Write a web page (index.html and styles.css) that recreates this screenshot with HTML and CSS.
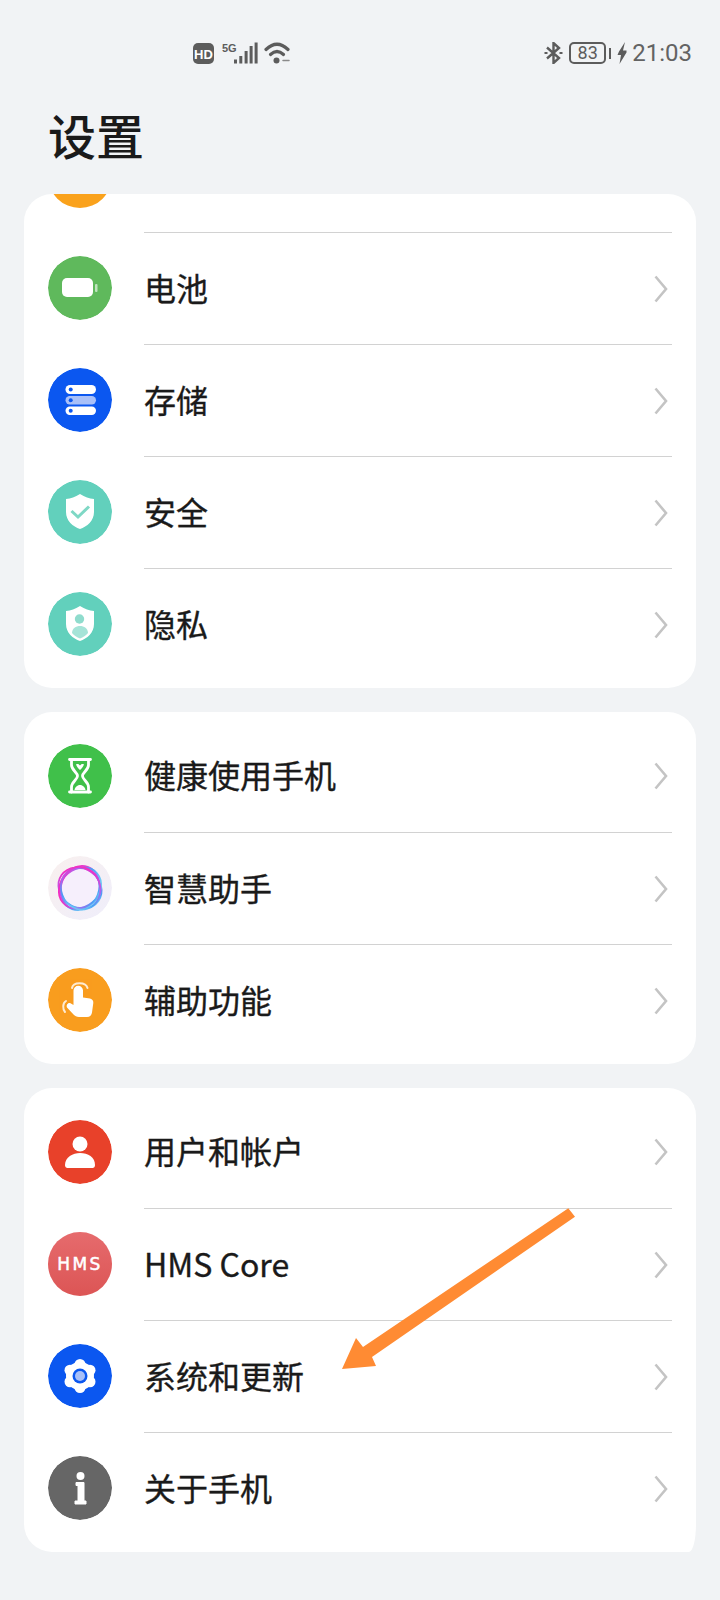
FILE: index.html
```html
<!DOCTYPE html>
<html lang="zh-CN">
<head>
	<meta charset="UTF-8">
	<title>设置</title>
	<link rel="stylesheet" href="styles.css">
</head>
<body>

	<div id="page">
		<div id="status">
			<div class="status-left">
				<svg width="21" height="22" viewBox="0 0 21 22"><rect y="1" width="21" height="21" rx="5" fill="#5c5c5c"/><text class="hd-text" x="10.5" y="16.500">HD</text></svg>
				<svg width="36" height="22" viewBox="0 0 36 22">
					<text class="fiveg-text" x="0" y="9.500">5G</text>
					<g fill="#5c5c5c">
						<rect x="12" y="17.5" width="3" height="4"/>
						<rect x="17.3" y="14" width="3" height="7.5"/>
						<rect x="22.6" y="9" width="3" height="12.5"/>
						<rect x="27.6" y="4" width="3" height="17.5"/>
						<rect x="32.6" y="0.5" width="3" height="21"/>
					</g>
				</svg>
				<svg width="26" height="22" viewBox="0 0 26 22" fill="none" stroke="#5c5c5c" stroke-width="3.200" stroke-linecap="round">
					<path d="M2 7.500Q13 -3 24 7.500"/>
					<path d="M6.500 12.500Q13 6.500 19.500 12.500"/>
					<circle cx="12.500" cy="18.500" r="3" fill="#5c5c5c" stroke="none"/>
					<path d="M19 18.500h6" stroke="#8a8a8a" stroke-width="1.500"/>
				</svg>
			</div>
			<div class="status-right">
				<svg width="19" height="22" viewBox="0 0 19 22" fill="none" stroke="#5c5c5c" stroke-width="2.400">
					<path d="M3 5.500L15 16L9.500 21V1L15 6L3 16.5"/>
					<path d="M0.500 11h3M15.500 11h3" stroke-width="2"/>
				</svg>
				<div class="battery">
					<span class="battery-box">83</span>
					<span class="battery-nub"></span>
				</div>
				<svg width="10" height="22" viewBox="0 0 10 22"><path d="M8 0L2 9.500L0.500 13H4L2.500 22L9.500 10.500V8.500H6Z" fill="#5c5c5c"/></svg>
				<span class="time">21:03</span>
			</div>
		</div>

		<h1 class="title">设置</h1>

		<div class="card card-first">
			<div class="row row-cut">
				<span class="icon icon-orange"></span>
			</div>
			<div class="row">
				<svg class="icon" viewBox="0 0 64 64">
					<circle cx="32" cy="32" r="32" fill="#5fb95c"/>
					<rect x="14" y="22" width="31" height="19" rx="5" fill="#fff"/>
					<rect x="47" y="28" width="2.5" height="8" rx="1" fill="#fff" opacity=".6"/>
				</svg>
				<div class="row-body"><span>电池</span><svg class="chevron" viewBox="0 0 14 28"><path d="M1.5 1.5L12 14L1.5 26.5"/></svg></div>
			</div>
			<div class="row">
				<svg class="icon" viewBox="0 0 64 64">
					<circle cx="32" cy="32" r="32" fill="#0b57f0"/>
					<rect x="17.5" y="17" width="30.5" height="9" rx="4.5" fill="#fff"/>
					<rect x="17.5" y="28" width="30.5" height="8.5" rx="4.2" fill="#a9c0f8"/>
					<rect x="17.5" y="38.5" width="30.5" height="8.5" rx="4.2" fill="#fff"/>
					<g fill="#0b57f0"><circle cx="22.7" cy="21.5" r="2"/><circle cx="22.7" cy="32.2" r="2"/><circle cx="22.7" cy="42.7" r="2"/></g>
				</svg>
				<div class="row-body"><span>存储</span><svg class="chevron" viewBox="0 0 14 28"><path d="M1.5 1.5L12 14L1.5 26.5"/></svg></div>
			</div>
			<div class="row">
				<svg class="icon" viewBox="0 0 64 64">
					<circle cx="32" cy="32" r="32" fill="#62d0bc"/>
					<path d="M32 14C37 17 41 18.500 46 19V32C46 41 39 46.500 32 49C25 46.500 18 41 18 32V19C23 18.500 27 17 32 14Z" fill="#fff"/>
					<path d="M23.500 31L30 37L41 26.500" fill="none" stroke="#7fd8c5" stroke-width="3"/>
				</svg>
				<div class="row-body"><span>安全</span><svg class="chevron" viewBox="0 0 14 28"><path d="M1.5 1.5L12 14L1.5 26.5"/></svg></div>
			</div>
			<div class="row">
				<svg class="icon" viewBox="0 0 64 64">
					<circle cx="32" cy="32" r="32" fill="#62d0bc"/>
					<path d="M32 14C37 17 41 18.500 46 19V32C46 41 39 46.500 32 49C25 46.500 18 41 18 32V19C23 18.500 27 17 32 14Z" fill="#fff"/>
					<circle cx="31.500" cy="27" r="4.700" fill="#8fdccd"/>
					<path d="M24 41C24 36.500 28 34 32 34C36 34 40 36.500 40 41C38 43.500 35 45.500 32 46.500C29 45.500 26 43.500 24 41Z" fill="#a5e4d8"/>
				</svg>
				<div class="row-body"><span>隐私</span><svg class="chevron" viewBox="0 0 14 28"><path d="M1.5 1.5L12 14L1.5 26.5"/></svg></div>
			</div>
		</div>

		<div class="card">
			<div class="row">
				<svg class="icon" viewBox="0 0 64 64">
					<circle cx="32" cy="32" r="32" fill="#40c04a"/>
					<g fill="none" stroke="#fff" stroke-width="2.800" stroke-linecap="round">
						<path d="M21.500 15.500H42.500M21.500 48H42.500"/>
						<path d="M23.500 16V21C23.500 26 29.500 28.500 29.500 32C29.500 35.500 23.500 38 23.500 43V48"/>
						<path d="M40.500 16V21C40.500 26 34.500 28.500 34.500 32C34.500 35.500 40.500 38 40.500 43V48"/>
					</g>
					<path d="M28 20.500C30 19.500 31 20.500 32 21.500C33 20.500 34 19.500 36 20.500C35 23 33.500 25 32 26C30.500 25 29 23 28 20.500Z" fill="#fff"/>
					<path d="M26.500 46C27 42.500 30 41 32 41C34 41 37 42.500 37.500 46Z" fill="#fff"/>
				</svg>
				<div class="row-body"><span>健康使用手机</span><svg class="chevron" viewBox="0 0 14 28"><path d="M1.5 1.5L12 14L1.5 26.500"/></svg></div>
			</div>
			<div class="row">
				<svg class="icon" viewBox="0 0 64 64">
					<defs>
						<linearGradient id="ringBg" x1="0" y1="0" x2="1" y2="1"><stop offset="0" stop-color="#f9f0ee"/><stop offset="1" stop-color="#efeefb"/></linearGradient>
						<linearGradient id="ringLine" gradientUnits="userSpaceOnUse" x1="14" y1="20" x2="50" y2="48"><stop offset="0" stop-color="#f52cc0"/><stop offset=".4" stop-color="#b060ee"/><stop offset=".75" stop-color="#4a9ff5"/><stop offset="1" stop-color="#7fd4f5"/></linearGradient>
					</defs>
					<circle cx="32" cy="32" r="32" fill="url(#ringBg)"/>
					<circle cx="32" cy="32" r="21" fill="#f6effc"/>
					<g fill="none" stroke="url(#ringLine)" stroke-width="1.800">
						<circle cx="32" cy="32" r="20"/>
						<ellipse cx="32" cy="32" rx="22.500" ry="19.500" transform="rotate(35 32 32)"/>
						<ellipse cx="32" cy="32" rx="19" ry="22.500" transform="rotate(20 32 32)"/>
						<ellipse cx="32" cy="32" rx="22.500" ry="19" transform="rotate(-40 32 32)"/>
						<ellipse cx="32.500" cy="31.500" rx="21.500" ry="19.500" transform="rotate(70 32 32)"/>
					</g>
				</svg>
				<div class="row-body"><span>智慧助手</span><svg class="chevron" viewBox="0 0 14 28"><path d="M1.5 1.5L12 14L1.5 26.500"/></svg></div>
			</div>
			<div class="row">
				<svg class="icon" viewBox="0 0 64 64">
					<circle cx="32" cy="32" r="32" fill="#f99d1e"/>
					<path d="M25.500 22.500A4.750 4.750 0 0 1 35 22.500V29.500L42 30.500C44.500 31 45.500 33 45.300 35L44 44.500C43.700 47 42 49 39 49H31C28.500 49 27 48 25.500 46.500L19 39.500C18 37.500 19.500 34.500 22 35L25.500 37Z" fill="#fff"/>
					<g fill="none" stroke="#fff" stroke-width="2" stroke-linecap="round" opacity=".8">
						<path d="M24 20C25 13.500 38 13.500 39.500 20"/>
						<path d="M18 33C14.500 35 14.500 41 17 44"/>
					</g>
				</svg>
				<div class="row-body"><span>辅助功能</span><svg class="chevron" viewBox="0 0 14 28"><path d="M1.5 1.5L12 14L1.5 26.500"/></svg></div>
			</div>
		</div>

		<div class="card card-last">
			<div class="row">
				<svg class="icon" viewBox="0 0 64 64">
					<circle cx="32" cy="32" r="32" fill="#e8412a"/>
					<circle cx="32" cy="24" r="7.500" fill="#fff"/>
					<path d="M17 45C17 37 25 33 32 33C40 33 47 37 47 45C47 47 46 48 44.500 48H19.500C18 48 17 47 17 45Z" fill="#fff"/>
				</svg>
				<div class="row-body"><span>用户和帐户</span><svg class="chevron" viewBox="0 0 14 28"><path d="M1.5 1.5L12 14L1.5 26.500"/></svg></div>
			</div>
			<div class="row">
				<span class="icon icon-hms">HMS</span>
				<div class="row-body"><span>HMS Core</span><svg class="chevron" viewBox="0 0 14 28"><path d="M1.5 1.5L12 14L1.5 26.500"/></svg></div>
			</div>
			<div class="row">
				<svg class="icon" viewBox="0 0 64 64">
					<circle cx="32" cy="32" r="32" fill="#0b57f0"/>
					<g fill="#fff">
						<circle cx="32" cy="20.500" r="5.500"/><circle cx="32" cy="43.500" r="5.500"/>
						<circle cx="22" cy="26.250" r="5.500"/><circle cx="42" cy="26.250" r="5.500"/>
						<circle cx="22" cy="37.750" r="5.500"/><circle cx="42" cy="37.750" r="5.500"/>
						<circle cx="32" cy="32" r="14"/>
					</g>
					<circle cx="32" cy="32" r="7.500" fill="#0b57f0"/>
					<circle cx="32" cy="32" r="5" fill="#a9c0f8"/>
				</svg>
				<div class="row-body"><span>系统和更新</span><svg class="chevron" viewBox="0 0 14 28"><path d="M1.5 1.5L12 14L1.5 26.500"/></svg></div>
			</div>
			<div class="row">
				<svg class="icon" viewBox="0 0 64 64">
					<circle cx="32" cy="32" r="32" fill="#666"/>
					<circle cx="32.500" cy="20" r="4" fill="#fff"/>
					<path d="M28 26.500H36V45H38V48H27V45H30V29.500H28Z" fill="#fff" stroke="#fff" stroke-linejoin="round"/>
				</svg>
				<div class="row-body"><span>关于手机</span><svg class="chevron" viewBox="0 0 14 28"><path d="M1.5 1.5L12 14L1.5 26.500"/></svg></div>
			</div>
		</div>

		<!-- annotation drawn over the list -->
		<svg id="arrow" width="720" height="1600" viewBox="0 0 720 1600">
			<polygon points="568.3,1208.3 575,1216.7 372,1357 376,1366 342,1369 356,1338 363,1347" fill="#ff8b33"/>
		</svg>
	</div>

</body>
</html>
```

FILE: styles.css
```css
*{
	margin: 0;
	padding: 0;
	box-sizing: border-box;
}
body{
	background: #f1f3f5;
	font-family: "Noto Sans CJK SC", "Liberation Sans", sans-serif;
	color: #1a1a1a;
}
#page{
	position: relative;
	width: 720px;
	height: 1600px;
	overflow: hidden;
}
#status{
	display: flex;
	justify-content: space-between;
	height: 64px;
	padding: 42px 28px 0 193px;
}
.status-left,
.status-right{
	display: flex;
	align-items: flex-start;
}
.status-left{
	gap: 8px;
}
.status-left svg:last-child{
	margin-left: -2px;
}
.status-right{
	gap: 6px;
}
.hd-text{
	font: bold 13px "Liberation Sans", sans-serif;
	fill: #fff;
	text-anchor: middle;
}
.fiveg-text{
	font: bold 11px "Liberation Sans", sans-serif;
	fill: #5c5c5c;
}
.battery{
	display: flex;
	align-items: center;
	gap: 3px;
	height: 22px;
}
.battery-box{
	width: 37px;
	height: 22px;
	border: 2px solid #5c5c5c;
	border-radius: 5px;
	font: 400 18px/18px Roboto, sans-serif;
	color: #5c5c5c;
	text-align: center;
}
.battery-nub{
	width: 2px;
	height: 11px;
	background: #5c5c5c;
}
.time{
	margin-left: -1px;
	font: 400 24px/22px Roboto, sans-serif;
	color: #636363;
}
.title{
	height: 48px;
	margin: 46px 0 36px 48px;
	font-size: 48px;
	font-weight: 500;
	line-height: 48px;
}
.card{
	margin: 0 24px 24px;
	padding: 8px 0;
	background: #fff;
	border-radius: 28px;
	overflow: hidden;
}
.card-first{
	padding-top: 0;
}
.card-last{
	border-bottom-right-radius: 7px 28px;
}
.row{
	display: flex;
	align-items: center;
	gap: 32px;
	height: 112px;
	padding: 0 24px;
	font-size: 32px;
	-webkit-text-stroke: 0.35px #1a1a1a;
}
.row-cut{
	margin-top: -74px;
}
.row-body{
	display: flex;
	flex: 1;
	align-items: center;
	justify-content: space-between;
	height: 100%;
	padding-right: 4px;
}
.row-body span{
	margin-bottom: 4px;
}
.row + .row .row-body{
	border-top: 1px solid #d2d2d2;
}
.icon{
	display: block;
	flex: none;
	width: 64px;
	height: 64px;
	border-radius: 50%;
}
.icon-orange{
	background: #faa21c;
}
.row .icon-hms{
	background: linear-gradient(#e66b6d, #dc5555);
	color: #fff;
	font: 400 17px/64px "DejaVu Sans", sans-serif;
	letter-spacing: 2.5px;
	text-align: center;
	-webkit-text-stroke: 0.5px #fff;
}
.chevron{
	width: 14px;
	height: 28px;
	fill: none;
	stroke: #c4c4c4;
	stroke-width: 2.6;
}
#arrow{
	position: absolute;
	top: 0;
	left: 0;
}
```
